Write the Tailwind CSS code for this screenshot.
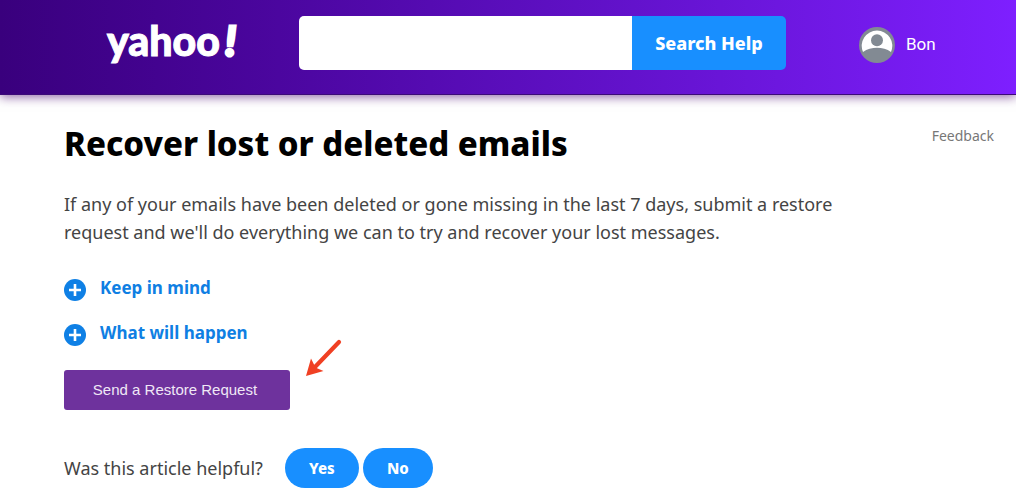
<!DOCTYPE html>
<html lang="en">
  <head>
    <meta charset="UTF-8" />
    <meta name="viewport" content="width=device-width, initial-scale=1.0" />
    <title>Recover lost or deleted emails | Yahoo Help</title>
    <script src="https://cdn.jsdelivr.net/npm/@tailwindcss/browser@4"></script>
  </head>
  <body class="bg-white text-[#444] font-['Noto_Sans',sans-serif]">
    <header
      class="flex items-start pt-4 pb-6 pl-[106px] pr-20 bg-linear-to-r from-[#39007d] to-[#7e1fff] border-b border-[#3c0a78] shadow-[0_2px_10px_rgba(70,0,110,0.6)]"
    >
      <a href="/" class="w-[193px] h-[54px]">
        <svg
          class="w-[140px] h-[54px] font-['Lato',sans-serif] font-black"
          viewBox="0 0 140 54"
          fill="#fff"
          stroke="#fff"
          stroke-width="1"
        >
          <text x="1" y="40" font-size="41">yahoo</text>
          <text x="119" y="40" font-size="41" font-style="italic" stroke-width="3">!</text>
        </svg>
      </a>

      <form role="search" class="flex flex-1 max-w-[487px] h-[54px]">
        <input
          type="search"
          name="q"
          aria-label="Search Help"
          class="flex-1 min-w-0 px-4 rounded-l-[5px] bg-white text-black text-lg outline-none"
        />
        <button
          type="submit"
          class="w-[154px] rounded-r-[5px] bg-[#188fff] text-white text-lg font-extrabold"
        >
          Search Help
        </button>
      </form>

      <a href="/account" class="flex items-center gap-[11px] ml-[73px] mt-[11px] text-white">
        <svg class="size-9" viewBox="0 0 36 36" aria-hidden="true">
          <circle cx="18" cy="18" r="18" fill="#828a93" />
          <path
            d="M4 25A15.3 15.3 0 1 1 32 25C28 22 23 20.800 18 20.800S8 22 4 25Z"
            fill="#fff"
          />
          <circle cx="18" cy="13.300" r="6" fill="#828a93" />
        </svg>
        <span class="font-['Roboto',sans-serif] text-[17px]">Bon</span>
      </a>
    </header>

    <main class="pl-16 pr-[22px] pt-6">
      <div class="flex items-start justify-between">
        <h1 class="text-black text-[33px] leading-[50px] font-extrabold">
          Recover lost or deleted emails
        </h1>
        <a href="#feedback" class="mt-[7px] text-[#777] text-sm">Feedback</a>
      </div>

      <p class="mt-[21px] max-w-[800px] text-lg leading-7">
        If any of your emails have been deleted or gone missing in the last 7 days, submit a restore
        request and we'll do everything we can to try and recover your lost messages.
      </p>

      <div class="mt-7 flex flex-col items-start gap-[17px] text-[#0f7fe3] text-[17px] leading-7 font-bold">
        <button type="button" aria-expanded="false" class="flex items-center gap-[14px]">
          <svg class="size-[22px] mt-[3px]" viewBox="0 0 22 22" aria-hidden="true">
            <circle cx="11" cy="11" r="11" fill="#0f80e5" />
            <path d="M11 5v12M5 11h12" stroke="#fff" stroke-width="2.600" />
          </svg>
          Keep in mind
        </button>
        <button type="button" aria-expanded="false" class="flex items-center gap-[14px]">
          <svg class="size-[22px] mt-[3px]" viewBox="0 0 22 22" aria-hidden="true">
            <circle cx="11" cy="11" r="11" fill="#0f80e5" />
            <path d="M11 5v12M5 11h12" stroke="#fff" stroke-width="2.600" />
          </svg>
          What will happen
        </button>
      </div>

      <div class="mt-[23px] flex items-start gap-4">
        <button
          type="button"
          class="w-[226px] h-10 pr-1 rounded-[3px] bg-[#6e329d] text-[#f0e8f6] text-[15px] font-['Liberation_Sans',sans-serif]"
        >
          Send a Restore Request
        </button>
        <svg class="w-9 h-[38px] -mt-8" viewBox="0 0 36 38" aria-hidden="true">
          <path d="M33 4L9 29" stroke="#f04023" stroke-width="4.200" stroke-linecap="round" />
          <path d="M0 38L5 20.500L8.500 27.500L10.500 30L17.500 33Z" fill="#f04023" />
        </svg>
      </div>

      <div class="mt-[38px] pb-3 flex items-center gap-1">
        <p class="mr-[18px] text-lg leading-7">Was this article helpful?</p>
        <button
          type="button"
          class="w-[74px] h-10 rounded-full bg-[#188fff] text-white text-[15px] font-extrabold"
        >
          Yes
        </button>
        <button
          type="button"
          class="w-[70px] h-10 rounded-full bg-[#188fff] text-white text-[15px] font-extrabold"
        >
          No
        </button>
      </div>
    </main>
  </body>
</html>
